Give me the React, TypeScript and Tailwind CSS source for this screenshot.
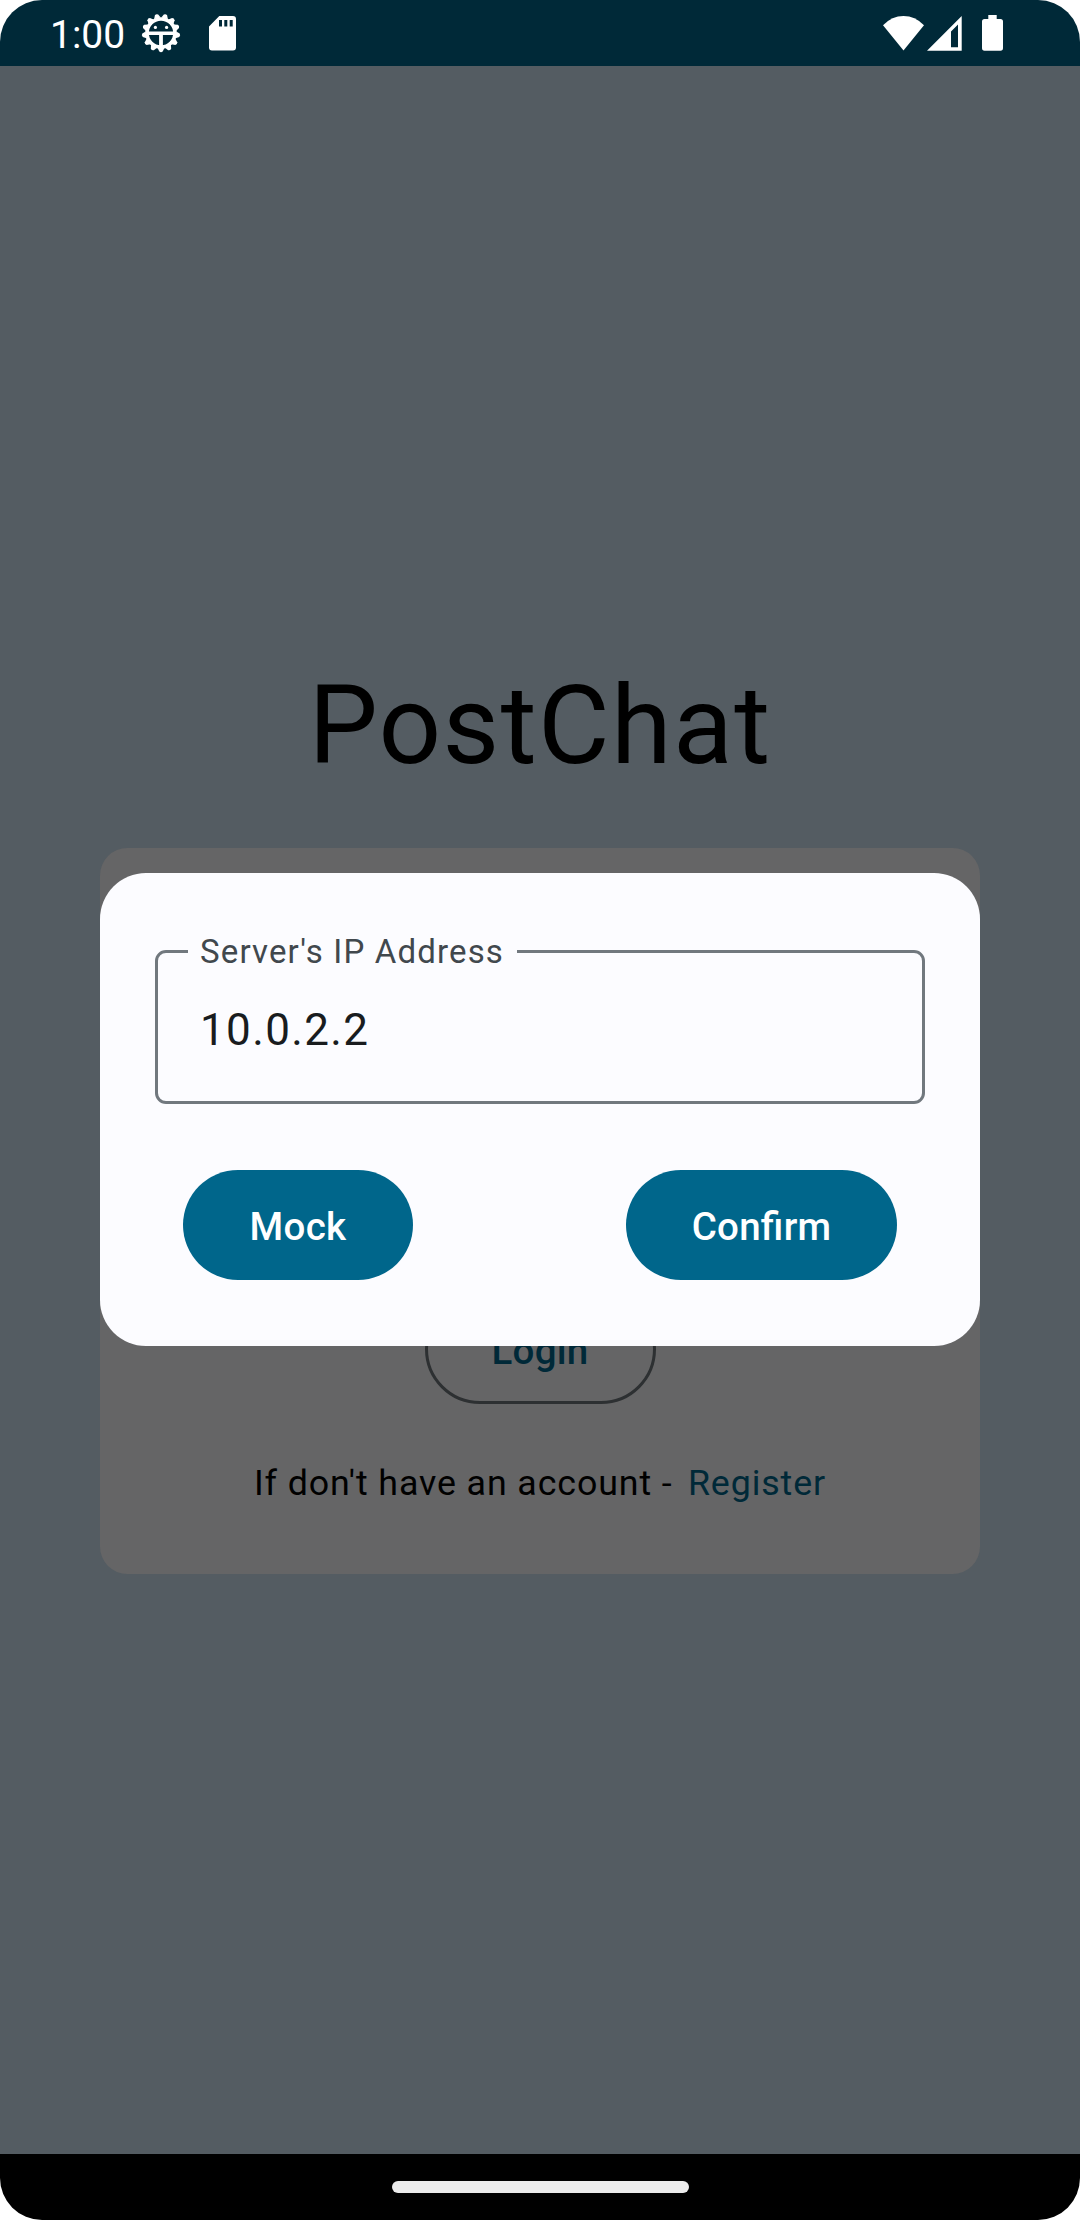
import React from "react";

const TEETH = Array.from({ length: 13 }, (_, i) => (i * 360) / 13);

function DebugIcon() {
  return (
    <svg className="h-10 w-10" viewBox="-20 -20 40 40" fill="none" stroke="#fff">
      <circle r="14" strokeWidth="3.6" />
      {TEETH.map((a) => (
        <path key={a} d="M-3.4 15 L-1.7 18.6 Q0 20 1.7 18.6 L3.4 15 Z" fill="#fff" stroke="none" transform={`rotate(${a})`} />
      ))}
      <path d="M-13 0.3H13" strokeWidth="3.4" />
      <path d="M0 0V14" strokeWidth="3.8" />
      <circle cx="-5.6" cy="-5.6" r="1.6" fill="#fff" stroke="none" />
      <circle cx="5.6" cy="-5.6" r="1.6" fill="#fff" stroke="none" />
    </svg>
  );
}

function SdCardIcon() {
  return (
    <svg className="h-[35px] w-[27px]" viewBox="0 0 27 35">
      <path
        fillRule="evenodd"
        fill="#fff"
        d="M10.3 0H24Q27 0 27 3V31.5Q27 34.5 24 34.5H3Q0 34.5 0 31.5V10.5ZM10 4V10.5H13V4ZM15.3 4V10.5H18.3V4ZM20.7 4V10.5H23.7V4Z"
      />
    </svg>
  );
}

function WifiIcon() {
  return (
    <svg className="h-[35px] w-[41px]" viewBox="0 0 41 35">
      <path fill="#fff" d="M0 9.2Q9 0 20.5 0T41 9.2L20.5 34.5Z" />
    </svg>
  );
}

function SignalIcon() {
  return (
    <svg className="h-[35px] w-[35px]" viewBox="0 0 35 35">
      <path fill="#fff" fillRule="evenodd" d="M0 34.7L34.7 0V34.7ZM24 15.5V31.3H31V8.5Z" />
    </svg>
  );
}

function BatteryIcon() {
  return (
    <svg className="h-[36px] w-[21px]" viewBox="0 0 21 36">
      <path fill="#fff" d="M6.3 0H14.7V4H18.5Q21 4 21 6.5V33Q21 35.7 18.5 35.7H2.5Q0 35.7 0 33V6.5Q0 4 2.5 4H6.3Z" />
    </svg>
  );
}

function StatusBar() {
  return (
    <header className="flex h-[66px] shrink-0 items-center justify-between bg-[#002938] pl-[50px] pr-[77px] text-white">
      <div className="flex items-center">
        <span className="w-[91px] pt-[4px] text-[39px] leading-[46px]">1:00</span>
        <DebugIcon />
        <span className="ml-[28px] flex">
          <SdCardIcon />
        </span>
      </div>
      <div className="flex items-center">
        <WifiIcon />
        <span className="ml-[3px] flex">
          <SignalIcon />
        </span>
        <span className="ml-[20px] flex">
          <BatteryIcon />
        </span>
      </div>
    </header>
  );
}

function LoginScreen() {
  return (
    <main className="flex flex-1 flex-col items-center bg-[#545c62]">
      <h1 className="mt-[595px] h-[187px] text-[110px] leading-[129px] tracking-[1.375px] text-black">PostChat</h1>
      <section className="flex h-[726px] w-[880px] flex-col items-center justify-end rounded-[27.5px] bg-[#656566] pb-[66px]">
        <button className="flex h-[110px] w-[231px] items-center justify-center rounded-full border-[3px] border-[#2d3032] pt-[2px] text-[38.5px] font-medium leading-[55px] tracking-[0.275px] text-[#002938]">
          Login
        </button>
        <p className="mt-[55px] flex h-[49px] whitespace-pre text-[35.75px] leading-[48px] tracking-[0.9px] text-black">
          If don't have an account - <a className="ml-[5.5px] text-[#002938]">Register</a>
        </p>
      </section>
    </main>
  );
}

function FilledButton({ className, children }: { className: string; children: React.ReactNode }) {
  return (
    <button
      className={`flex h-[110px] items-center justify-center rounded-full bg-[#00668b] pt-[2px] text-[38.5px] font-medium leading-[55px] tracking-[0.275px] text-white [font-feature-settings:'liga'] ${className}`}
    >
      {children}
    </button>
  );
}

function ServerDialog() {
  return (
    <div role="dialog" className="absolute left-[100px] top-[873px] flex h-[473px] w-[880px] flex-col rounded-[46px] bg-[#fcfcff] px-[55px] pt-[77px]">
      <fieldset className="relative h-[154px] rounded-[11px] border-[3px] border-[#71787e] px-[42px]">
        <span className="absolute left-[30px] top-[-24px] h-[45px] w-[329px] bg-[#fcfcff] pl-[12px] text-[33px] leading-[45px] tracking-[1.15px] text-[#41484d]">
          Server's IP Address
        </span>
        <p className="pt-[44px] text-[44px] leading-[66px] tracking-[1.375px] text-[#191c1e]">10.0.2.2</p>
      </fieldset>
      <div className="mt-[66px] flex justify-between px-[28px]">
        <FilledButton className="w-[230px]">Mock</FilledButton>
        <FilledButton className="w-[271px]">Confirm</FilledButton>
      </div>
    </div>
  );
}

function NavigationBar() {
  return (
    <footer className="flex h-[66px] shrink-0 items-center justify-center bg-black">
      <span className="h-[12px] w-[297px] rounded-full bg-[#ececec]" />
    </footer>
  );
}

export default function App() {
  return (
    <div className="h-[2220px] w-[1080px] bg-white">
      <div className="relative flex h-full w-full flex-col overflow-hidden rounded-[42px] font-[Roboto,sans-serif]">
        <StatusBar />
        <LoginScreen />
        <NavigationBar />
        <ServerDialog />
      </div>
    </div>
  );
}
